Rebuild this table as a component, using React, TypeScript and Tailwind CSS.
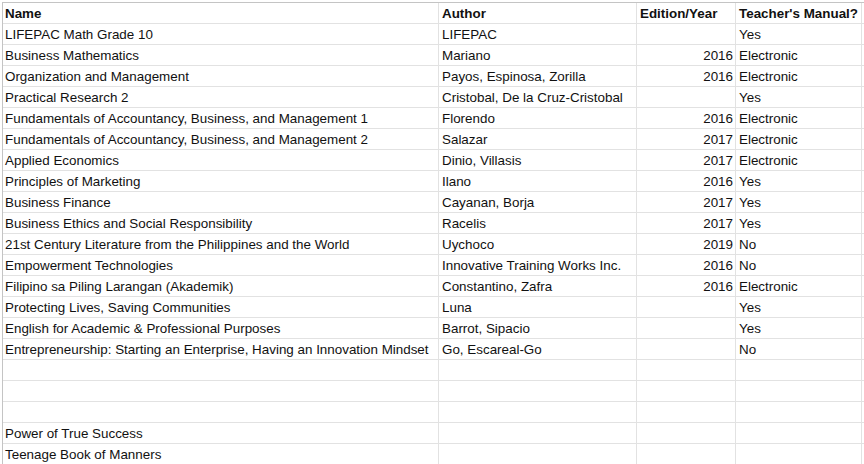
const ROWS: [string, string, string, string][] = [
  ["LIFEPAC Math Grade 10", "LIFEPAC", "", "Yes"],
  ["Business Mathematics", "Mariano", "2016", "Electronic"],
  ["Organization and Management", "Payos, Espinosa, Zorilla", "2016", "Electronic"],
  ["Practical Research 2", "Cristobal, De la Cruz-Cristobal", "", "Yes"],
  ["Fundamentals of Accountancy, Business, and Management 1", "Florendo", "2016", "Electronic"],
  ["Fundamentals of Accountancy, Business, and Management 2", "Salazar", "2017", "Electronic"],
  ["Applied Economics", "Dinio, Villasis", "2017", "Electronic"],
  ["Principles of Marketing", "Ilano", "2016", "Yes"],
  ["Business Finance", "Cayanan, Borja", "2017", "Yes"],
  ["Business Ethics and Social Responsibility", "Racelis", "2017", "Yes"],
  ["21st Century Literature from the Philippines and the World", "Uychoco", "2019", "No"],
  ["Empowerment Technologies", "Innovative Training Works Inc.", "2016", "No"],
  ["Filipino sa Piling Larangan (Akademik)", "Constantino, Zafra", "2016", "Electronic"],
  ["Protecting Lives, Saving Communities", "Luna", "", "Yes"],
  ["English for Academic & Professional Purposes", "Barrot, Sipacio", "", "Yes"],
  ["Entrepreneurship: Starting an Enterprise, Having an Innovation Mindset", "Go, Escareal-Go", "", "No"],
  ["", "", "", ""],
  ["", "", "", ""],
  ["", "", "", ""],
  ["Power of True Success", "", "", ""],
  ["Teenage Book of Manners", "", "", ""],
];

const cell =
  "h-[21px] border-b border-r border-[#e2e2e2] leading-[22px] whitespace-nowrap overflow-hidden";

function Row({ cols, header }: { cols: string[]; header?: boolean }) {
  const b = header ? "font-bold" : "";
  return (
    <>
      <div className={`${cell} px-[2px] ${b}`}>{cols[0]}</div>
      <div className={`${cell} px-[3px] ${b}`}>{cols[1]}</div>
      <div className={`${cell} px-[2px] ${header ? "pl-[3px] text-left" : "text-right"} ${b}`}>{cols[2]}</div>
      <div className={`${cell} px-[3px] ${b}`}>{cols[3]}</div>
      <div className={cell} />
    </>
  );
}

export default function App() {
  return (
    <div className="h-[464px] w-[864px] overflow-hidden bg-white pl-[2px] pt-[2px] font-['Liberation_Sans',Arial,sans-serif] text-[13.4px] text-[#111]">
      <div className="grid grid-cols-[436px_198px_99px_126px_40px] border-l border-t border-[#c4c4c4]">
        <Row cols={["Name", "Author", "Edition/Year", "Teacher's Manual?"]} header />
        {ROWS.map((r, i) => (
          <Row key={i} cols={r} />
        ))}
      </div>
    </div>
  );
}
